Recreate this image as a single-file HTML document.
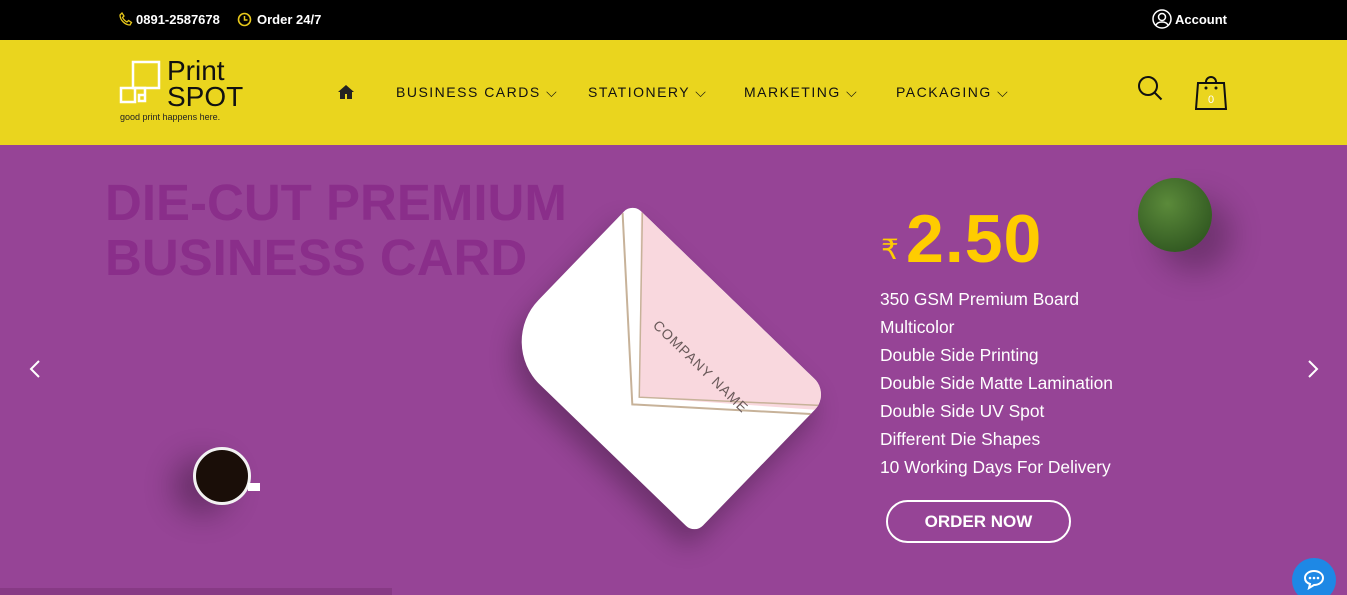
<!DOCTYPE html>
<html><head><meta charset="utf-8"><style>
*{margin:0;padding:0;box-sizing:border-box}
body{width:1347px;height:595px;overflow:hidden;font-family:"Liberation Sans",sans-serif;background:#964496;position:relative}
.top{height:40px;background:#000;color:#fff;font-size:13px;font-weight:bold;position:relative}
.top span{position:absolute;top:12px}
.hdr{height:105px;background:#ead51e;position:relative}
.nav{position:absolute;top:44px;font-size:14px;letter-spacing:1.5px;color:#111}
.hero{position:absolute;top:145px;left:0;width:1347px;height:450px;background:#964496;overflow:hidden}
.title{position:absolute;left:105px;top:30px;font-size:51px;font-weight:bold;color:#8a2e8a;line-height:55px}
.feat{position:absolute;left:880px;top:140px;color:#fff;font-size:17.4px;line-height:28px}
.btn{position:absolute;left:886px;top:355px;width:185px;height:43px;border:2px solid #fff;border-radius:22px;color:#fff;font-size:17px;font-weight:bold;text-align:center;line-height:39px}
</style></head><body>
<div class="top">
<svg style="position:absolute;left:119px;top:12px" width="14" height="14" viewBox="0 0 14 14"><path d="M3 1l2 3-1.5 1.5c1 2 2.5 3.5 4.5 4.5L9.5 8.5l3 2-1.5 2.5C6 13 1 8 1 3z" fill="none" stroke="#e8c81a" stroke-width="1.3"/></svg>
<span style="left:136px">0891-2587678</span>
<svg style="position:absolute;left:237px;top:12px" width="15" height="15" viewBox="0 0 15 15"><circle cx="7.5" cy="7.5" r="6" fill="none" stroke="#e8c81a" stroke-width="1.6"/><path d="M7.5 4v4h3" fill="none" stroke="#e8c81a" stroke-width="1.5"/></svg>
<span style="left:257px">Order 24/7</span>
<svg style="position:absolute;left:1152px;top:9px" width="20" height="20" viewBox="0 0 20 20"><circle cx="10" cy="10" r="9" fill="none" stroke="#fff" stroke-width="1.5"/><circle cx="10" cy="8" r="3.5" fill="none" stroke="#fff" stroke-width="1.5"/><path d="M4 16c2-4 10-4 12 0" fill="none" stroke="#fff" stroke-width="1.5"/></svg>
<span style="left:1175px">Account</span>
</div>
<div class="hdr">
<svg style="position:absolute;left:119px;top:20px" width="45" height="45" viewBox="0 0 45 45"><rect x="14" y="2" width="26" height="26" fill="none" stroke="#fff" stroke-width="2.5"/><rect x="2" y="28" width="14" height="14" fill="none" stroke="#fff" stroke-width="2.5"/><path d="M16 28h10v13h-6v-6h6" fill="none" stroke="#fff" stroke-width="2.5"/></svg>
<div style="position:absolute;left:167px;top:18px;font-size:28px;line-height:26px;color:#111">Print<br>SPOT</div>
<div style="position:absolute;left:120px;top:72px;font-size:9px;color:#222">good print happens here.</div>
<svg style="position:absolute;left:337px;top:44px" width="18" height="16" viewBox="0 0 18 16"><path d="M9 1L1 8h2v7h5v-5h2v5h5V8h2z" fill="#222"/></svg>
<div class="nav" style="left:396px">BUSINESS CARDS ⌵</div>
<div class="nav" style="left:588px">STATIONERY ⌵</div>
<div class="nav" style="left:744px">MARKETING ⌵</div>
<div class="nav" style="left:896px">PACKAGING ⌵</div>
<svg style="position:absolute;left:1136px;top:34px" width="28" height="28" viewBox="0 0 28 28"><circle cx="12" cy="12" r="9" fill="none" stroke="#111" stroke-width="2"/><path d="M18.5 18.5l7 7" stroke="#111" stroke-width="2"/></svg>
<svg style="position:absolute;left:1195px;top:34px" width="34" height="38" viewBox="0 0 34 38"><path d="M11 8a5 5 0 0 1 10 0" fill="none" stroke="#111" stroke-width="2"/><path d="M3 9h26l2 26H1z" fill="none" stroke="#111" stroke-width="2"/><circle cx="11" cy="14" r="1.5" fill="#111"/><circle cx="21" cy="14" r="1.5" fill="#111"/><text x="13" y="29" fill="#fff" font-size="11" font-family="Liberation Sans">0</text></svg>
</div>
<div class="hero">
<div class="title">DIE-CUT PREMIUM<br>BUSINESS CARD</div>
<div style="position:absolute;left:0;top:443px;width:392px;height:7px;background:#873a85"></div>
<div style="position:absolute;left:526px;top:126px;width:275px;height:195px;transform:rotate(44deg);transform-origin:center">
<div style="width:275px;height:195px;background:#fff;border-radius:12px 22px 12px 60px;box-shadow:6px 16px 26px rgba(0,0,0,.28);position:relative;overflow:hidden">
<div style="position:absolute;inset:0;background:#f9d8de;clip-path:polygon(12px 0,275px 0,275px 22px,140px 135px)"></div>
<svg style="position:absolute;left:0;top:0" width="275" height="195"><path d="M0 14L140 145L275 28" fill="none" stroke="#c7b299" stroke-width="2"/><path d="M14 0L140 135L275 16" fill="none" stroke="#c7b299" stroke-width="1.5"/></svg>
<div style="position:absolute;left:100px;top:62px;color:#6a5a5a;font-size:14px;letter-spacing:1px">COMPANY NAME</div>
</div></div>
<div style="position:absolute;left:193px;top:302px;width:58px;height:58px;border-radius:50%;background:#1a0e08;border:3px solid #f2f2f2;box-shadow:-20px 10px 30px rgba(0,0,0,.3)"></div>
<div style="position:absolute;left:248px;top:338px;width:12px;height:8px;background:#fff"></div>
<div style="position:absolute;left:1138px;top:33px;width:74px;height:74px;border-radius:50%;background:radial-gradient(circle at 40% 35%,#5b8a3a,#254a1a);box-shadow:20px 20px 30px rgba(0,0,0,.25)"></div>
<div style="position:absolute;left:881px;top:88px;color:#fc0;font-size:28px">₹</div>
<div style="position:absolute;left:906px;top:55px;color:#fc0;font-size:68px;font-weight:bold;letter-spacing:1px">2.50</div>
<div class="feat">350 GSM Premium Board<br>Multicolor<br>Double Side Printing<br>Double Side Matte Lamination<br>Double Side UV Spot<br>Different Die Shapes<br>10 Working Days For Delivery</div>
<div class="btn">ORDER NOW</div>
<svg style="position:absolute;left:28px;top:214px" width="14" height="20" viewBox="0 0 14 20"><path d="M11 2L3 10l8 8" fill="none" stroke="#fff" stroke-width="2"/></svg>
<svg style="position:absolute;left:1306px;top:214px" width="14" height="20" viewBox="0 0 14 20"><path d="M3 2l8 8-8 8" fill="none" stroke="#fff" stroke-width="2"/></svg>
<div style="position:absolute;left:1292px;top:413px;width:44px;height:44px;border-radius:50%;background:#1e88e5"></div>
<svg style="position:absolute;left:1302px;top:423px" width="24" height="24" viewBox="0 0 24 24"><path d="M12 3c5 0 9 3 9 7s-4 7-9 7l-5 3 1-4c-3-1-5-3-5-6 0-4 4-7 9-7z" fill="none" stroke="#fff" stroke-width="2"/><circle cx="8" cy="10" r="1.3" fill="#fff"/><circle cx="12" cy="10" r="1.3" fill="#fff"/><circle cx="16" cy="10" r="1.3" fill="#fff"/></svg>
</div>
</body></html>
